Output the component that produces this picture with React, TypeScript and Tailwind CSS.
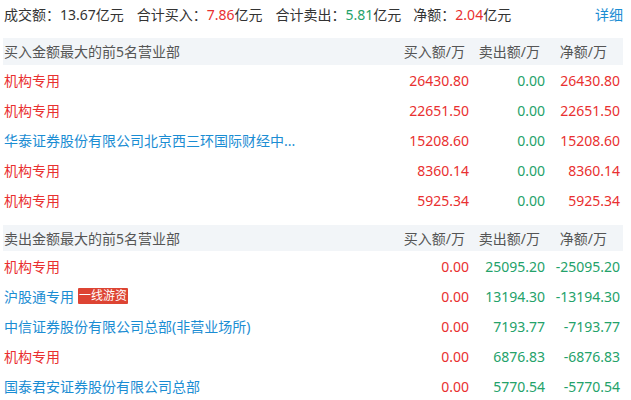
import React from "react";

const RED = "text-[#e93030]";
const GREEN = "text-[#24a26a]";
const BLUE = "text-[#1b8dd3]";

type Row = { name: string; nameColor: string; badge?: string; buy: string; sell: string; net: string };

const buyRows: Row[] = [
  { name: "机构专用", nameColor: RED, buy: "26430.80", sell: "0.00", net: "26430.80" },
  { name: "机构专用", nameColor: RED, buy: "22651.50", sell: "0.00", net: "22651.50" },
  { name: "华泰证券股份有限公司北京西三环国际财经中...", nameColor: BLUE, buy: "15208.60", sell: "0.00", net: "15208.60" },
  { name: "机构专用", nameColor: RED, buy: "8360.14", sell: "0.00", net: "8360.14" },
  { name: "机构专用", nameColor: RED, buy: "5925.34", sell: "0.00", net: "5925.34" },
];

const sellRows: Row[] = [
  { name: "机构专用", nameColor: RED, buy: "0.00", sell: "25095.20", net: "-25095.20" },
  { name: "沪股通专用", nameColor: BLUE, badge: "一线游资", buy: "0.00", sell: "13194.30", net: "-13194.30" },
  { name: "中信证券股份有限公司总部(非营业场所)", nameColor: BLUE, buy: "0.00", sell: "7193.77", net: "-7193.77" },
  { name: "机构专用", nameColor: RED, buy: "0.00", sell: "6876.83", net: "-6876.83" },
  { name: "国泰君安证券股份有限公司总部", nameColor: BLUE, buy: "0.00", sell: "5770.54", net: "-5770.54" },
];

function Header({ title, h }: { title: string; h: string }) {
  return (
    <div className={`flex items-center bg-[#f2f5f8] text-[#555] ${h}`}>
      <div className="flex-1 pl-[1px]">{title}</div>
      <div className="w-[70px] text-right pr-[4px]">买入额/万</div>
      <div className="w-[76px] text-right pr-[5px]">卖出额/万</div>
      <div className="w-[75px] text-right pr-[13px]">净额/万</div>
      <div className="w-[3px]" />
    </div>
  );
}

function DataRow({ r, sellSection }: { r: Row; sellSection: boolean }) {
  return (
    <div className="flex items-center h-[30px]">
      <div className={`flex-1 pl-[1px] flex items-center ${r.nameColor}`}>
        <span>{r.name}</span>
        {r.badge && (
          <span className="ml-[4px] bg-[#dd4433] text-white text-[12px] leading-[16px] px-[1px] rounded-[1px]">
            {r.badge}
          </span>
        )}
      </div>
      <div className={`w-[70px] text-right ${RED}`}>{r.buy}</div>
      <div className={`w-[76px] text-right ${GREEN}`}>{r.sell}</div>
      <div className={`w-[75px] text-right ${sellSection ? GREEN : RED}`}>{r.net}</div>
      <div className="w-[3px]" />
    </div>
  );
}

export default function App() {
  return (
    <div
      className="w-[631px] h-[400px] bg-white text-[14px] text-[#333] overflow-hidden"
      style={{ fontFamily: '"Noto Sans", "Noto Sans CJK SC", sans-serif' }}
    >
      <div className="w-[620px] ml-[3px]">
        <div className="flex items-center h-[28px] pl-[1px]">
          <span>成交额：<span>13.67</span>亿元</span>
          <span className="ml-[13px]">合计买入：<span className={RED}>7.86</span>亿元</span>
          <span className="ml-[13px]">合计卖出：<span className={GREEN}>5.81</span>亿元</span>
          <span className="ml-[12px]">净额：<span className={RED}>2.04</span>亿元</span>
          <span className={`ml-auto ${BLUE}`}>详细</span>
        </div>
        <div className="mt-[10px]">
          <Header title="买入金额最大的前5名营业部" h="h-[27px]" />
          {buyRows.map((r, i) => (
            <DataRow key={i} r={r} sellSection={false} />
          ))}
        </div>
        <div className="mt-[10px]">
          <Header title="卖出金额最大的前5名营业部" h="h-[26px]" />
          {sellRows.map((r, i) => (
            <DataRow key={i} r={r} sellSection={true} />
          ))}
        </div>
      </div>
    </div>
  );
}
